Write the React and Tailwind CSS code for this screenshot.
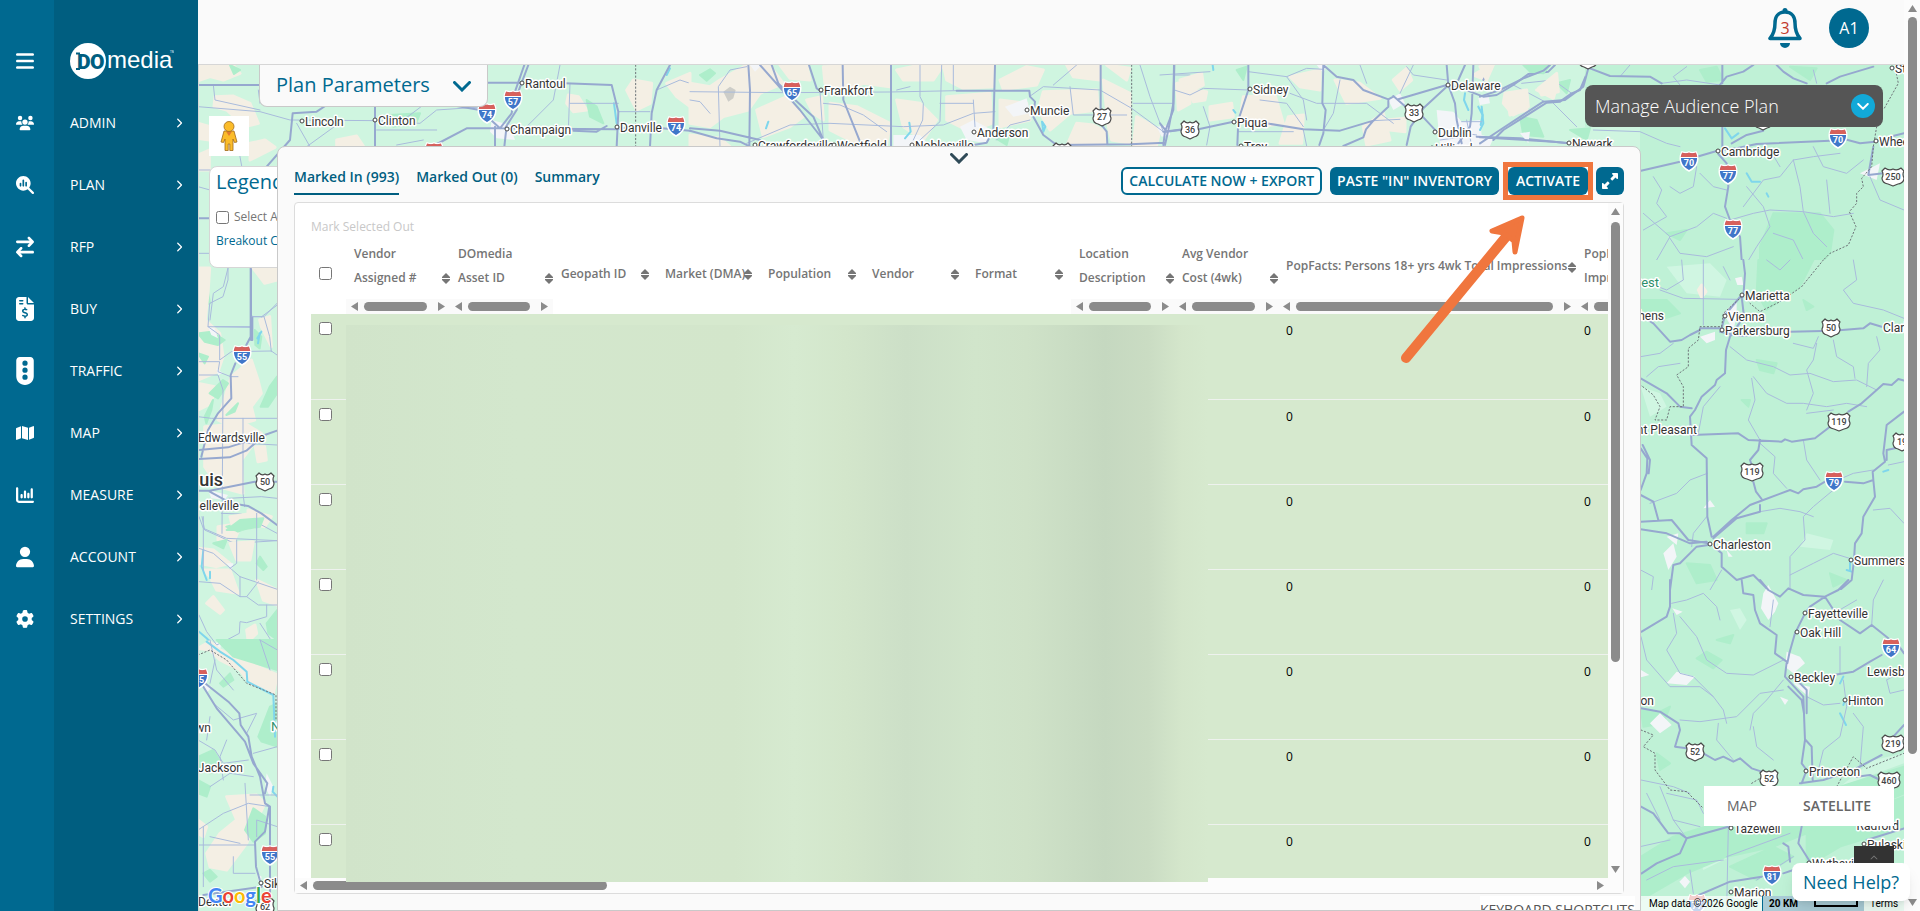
import React, { useState } from "react";
import {
  FaArrowRightArrowLeft,
  FaBars,
  FaChartColumn,
  FaChevronRight,
  FaChevronUp,
  FaFileInvoiceDollar,
  FaGear,
  FaMagnifyingGlassChart,
  FaMap,
  FaTrafficLight,
  FaUpRightAndDownLeftFromCenter,
  FaUser,
  FaUsers,
} from "react-icons/fa6";

const menu = [
  { label: "ADMIN", icon: FaUsers },
  { label: "PLAN", icon: FaMagnifyingGlassChart },
  { label: "RFP", icon: FaArrowRightArrowLeft },
  { label: "BUY", icon: FaFileInvoiceDollar },
  { label: "TRAFFIC", icon: FaTrafficLight },
  { label: "MAP", icon: FaMap },
  { label: "MEASURE", icon: FaChartColumn },
  { label: "ACCOUNT", icon: FaUser },
  { label: "SETTINGS", icon: FaGear },
];

const columns = [
  { lines: ["Vendor", "Assigned #"], width: "w-[104px]", scroll: true },
  { lines: ["DOmedia", "Asset ID"], width: "w-[103px]", scroll: true },
  { lines: ["Geopath ID"], width: "w-[104px]" },
  { lines: ["Market (DMA)"], width: "w-[103px]" },
  { lines: ["Population"], width: "w-[104px]" },
  { lines: ["Vendor"], width: "w-[103px]" },
  { lines: ["Format"], width: "w-[104px]" },
  { lines: ["Location", "Description"], width: "w-[103px]", scroll: true },
  { lines: ["Avg Vendor", "Cost (4wk)"], width: "w-[104px]", scroll: true },
  {
    lines: ["PopFacts: Persons 18+ yrs 4wk Total Impressions"],
    width: "w-[298px]",
    scroll: true,
    value: "0",
  },
  {
    lines: ["PopFacts: Persons", "Impressions"],
    width: "w-[135px]",
    scroll: true,
    value: "0",
  },
];

const rows = [1, 2, 3, 4, 5, 6, 7];

// Map sheets. Each one has its own origin and is drawn at three units per pixel.
const sheets = [
  {
    x: 190,
    y: 60,
    land: [
      "M24 15H130L150 40 100 60 60 50 24 62z",
      "M75 110L130 108 180 130 205 190 165 200 110 150 72 140z",
      "M24 190L60 200 58 240 24 235z",
      "M180 250L225 240 255 262 180 300z",
      "M1135 105L1165 110 1190 150 1150 155 1130 130z",
      "M1330 60L1385 70 1380 130 1340 150 1310 90z",
      "M1430 70L1500 40V140L1460 110z",
      "M440 240L500 228 520 258H440z",
      "M24 285L58 270V330H24z",
    ],
    woods: [
      "M120 15L150 30 132 42z",
      "M1190 120L1220 140 1240 190 1200 170z",
      "M600 165L690 160 680 185 610 200z",
      "M24 690L50 670 60 730 24 740z",
    ],
    town: ["M905 180L960 195 975 240 920 235 900 215z"],
    water: ["M1272 130L1280 190", "M1440 25L1430 45"],
    major: [
      "M24 75H210",
      "M890 68H990M1125 70L1265 75 1285 155 1280 260",
      "M1440 15L1400 90 1385 160 1380 260",
      "M1003 15L975 95 965 160 930 205 870 150 800 138",
      "M1015 15L985 95 980 150 945 205",
      "M735 255L830 205 935 205 1280 208 1340 198 1500 212",
      "M1150 212L1220 215 1250 198",
      "M230 320L300 240 308 160 380 155 410 135",
      "M915 200V260M555 135V260M943 260L948 215",
      "M183 620V840M24 475H60M187 770V840",
    ],
    minor: [
      "M24 140L210 155 300 180 560 182 690 190 740 150 890 140",
      "M70 75L75 120 210 150M205 90L210 130",
      "M130 180L155 318M24 330H60M24 380L60 390M24 580H60",
      "M560 210H740M350 260L440 195 460 180M320 190L360 260",
      "M1140 70L1135 215M1140 130H1285M1285 155H1380M1400 90L1470 60 1500 70",
      "M640 180L720 120M620 255L700 240M1000 210L1090 120 1110 15",
      "M115 620L100 680 70 700 60 780M24 800H183M187 770H215L262 735M215 770L235 840",
    ],
    border: ["M1337 15V260"],
  },
  {
    x: 690,
    y: 60,
    land: [
      "M0 70L60 80 90 60 170 15 240 18 280 70 210 100 175 150 100 170 60 200 0 190z",
      "M0 225L90 235 120 260H0z",
      "M200 150L290 110 340 170 300 200 220 230z",
      "M270 15H350L360 60 300 55z",
      "M400 20L600 15 600 80 520 70 460 95 405 70z",
      "M350 120L395 110 400 180 370 160z",
      "M420 130L500 140 600 190 590 255 500 250 420 210z",
      "M620 120L690 130 740 180 700 240 640 200z",
      "M620 30L690 15H760L730 60 640 60z",
      "M760 15L910 18 910 80 820 85 770 60z",
      "M770 110L900 100 905 190 840 215 770 180z",
      "M930 60L1010 20 1060 30 1040 75 940 88z",
      "M930 120L1010 130 1020 180 930 200z",
      "M1060 95L1220 90 1225 150 1140 160 1080 210 1045 150z",
      "M1130 15L1230 15V60L1150 50z",
      "M1160 190L1210 195 1245 215 1245 258H1130z",
      "M1240 60L1320 100 1320 250 1265 240 1255 200z",
      "M1250 15L1320 25 1310 60z",
      "M1340 170L1410 210 1400 255H1330z",
      "M1460 70L1500 60V130L1465 150z",
    ],
    grey: ["M100 95L120 80 137 90 130 115 115 125z"],
    woods: ["M30 45L60 28 75 40 50 62z", "M900 225L960 215 950 255z"],
    town: [
      "M945 140L1010 115 1020 160 970 170z",
      "M810 200L850 180 905 210 890 250 830 240z",
      "M180 15H215L195 35z",
      "M1400 200L1440 195 1440 225 1415 230z",
      "M610 225L690 225 720 258H610z",
    ],
    water: ["M235 185L228 205", "M658 188L662 215 645 235", "M1056 185L1066 200 1060 215z"],
    major: [
      "M175 15L180 90 178 260",
      "M210 15L330 150 400 240",
      "M245 15L265 70 310 115 370 170 400 240",
      "M357 15L380 85 395 95",
      "M458 15L460 120 510 245",
      "M603 15V260",
      "M915 15L910 210 890 248 850 255",
      "M800 92H1018L1020 110 1035 125 1030 170 1060 225 1100 255 1320 253 1425 248",
      "M1232 15V150M1235 195L1250 215 1252 250",
      "M0 205L90 212 210 240M0 212L80 235 150 245 180 260",
      "M1452 15L1450 130 1435 210 1425 255",
      "M1420 215L1480 208",
    ],
    minor: [
      "M0 95L280 98 600 96 800 92",
      "M90 260L85 80 120 30 170 20",
      "M390 95L400 240M400 130L450 135 520 165 590 215",
      "M170 250L300 195 420 190 640 200 760 195 850 160 915 155",
      "M690 15V110L700 130 698 180 670 240M755 15L750 185 690 240",
      "M1018 110L1060 80 1230 90 1325 145 1420 215",
      "M1350 15L1380 110 1420 215M1330 130H1450",
      "M1140 80L1150 165H1310M1160 15L1090 75",
      "M1020 180L960 195 920 240M1452 45H1500M790 15V90M850 120L855 200",
      "M0 120L30 125 60 160M620 90L660 80M750 130H850",
    ],
    border: ["M1325 15V260"],
  },
  {
    x: 1160,
    y: 60,
    land: [
      "M60 60L125 40 130 75 95 90z",
      "M85 90L140 95 135 120 100 125z",
      "M150 140L215 130 220 170 150 180z",
      "M250 110L345 105 370 190 300 200 240 175z",
      "M390 50L480 30V90L420 80z",
      "M385 170L430 165 425 250 360 250z",
      "M525 60L600 70 660 115 560 130z",
      "M610 200L670 160 690 240 620 255z",
      "M700 60L740 25 755 60 720 90z",
      "M680 180L735 175 735 215 690 210z",
      "M1040 100L1100 100 1100 150 1050 165z",
      "M940 45L975 25 980 60z",
      "M1130 90L1190 80 1180 115z",
    ],
    woods: ["M230 30L260 20 250 60z", "M1080 170L1130 180 1150 230 1090 225z", "M1190 70L1230 60 1220 100z"],
    town: [
      "M685 120L720 100 735 130 700 150z",
      "M830 150L880 155 905 185 960 180 965 225 1000 235 990 258H840z",
      "M470 15H500L490 40z",
      "M955 115L985 105 990 130 960 135z",
    ],
    water: ["M158 15L160 30", "M220 150L226 158", "M915 100L912 120 925 150", "M955 140L968 165 962 195"],
    major: [
      "M43 15L40 150 15 215 10 255M0 190L20 215 60 210",
      "M115 208L220 185 320 190 430 208 540 212 640 182 685 140 685 118 700 110",
      "M265 15L265 90 235 180 232 255",
      "M490 15L530 50 580 60 610 90 685 118",
      "M490 15L487 130 497 150 490 220 478 255",
      "M550 258L610 232 618 208 640 182",
      "M700 108L742 145M788 170L830 215",
      "M715 118L860 75 905 85 970 110 1010 105 1060 75 1105 42 1165 35 1185 15",
      "M860 80L790 145 752 200 740 255",
      "M860 15L865 75 885 130 890 180 905 250",
      "M915 15L895 60M995 15L970 60",
      "M940 15L935 160 930 200 895 250",
      "M1000 240L1030 210 1160 128 1200 125 1235 100 1260 90 1285 30",
      "M950 230L1080 235 1225 250 1320 248",
    ],
    minor: [
      "M0 45L150 35M43 90L90 105 130 85 265 90M300 120L380 130 430 200",
      "M265 35L380 50 440 25 490 28M390 100L470 130H620L700 190",
      "M760 15L720 100M860 60L760 45 740 20M380 50L430 120 440 180",
      "M1060 75L1160 128M1085 70L1180 60 1235 100M1180 130L1250 200",
      "M540 60L520 160 490 210M640 182L720 178M600 15L620 70",
      "M905 185H965M880 215L950 225M920 180L935 258M840 240L900 232",
      "M130 140L150 200 140 255M235 215H400M430 210L440 258",
    ],
  },
  {
    x: 1480,
    y: 0,
    land: ["M75 280L140 270 145 320 100 345 70 310z", "M175 265L230 220 235 275 185 285z", "M0 200L40 195 20 240z"],
    hills: ["M315 195H1280V860H480V380L315 380z"],
    woods: [
      "M130 195H210L190 220 150 215z",
      "M840 740L880 640 1020 640 1060 690 1050 760 980 840H840z",
      "M270 390L330 385 320 420z",
      "M660 210L710 200 730 240 680 245z",
      "M930 200L1010 205 990 240z",
      "M560 700L620 690 600 720z",
    ],
    town: ["M120 400L150 395 145 430z", "M260 420L320 440 280 440z", "M1140 520L1200 490 1190 540z"],
    water: ["M5 320L10 370 0 390", "M735 385L755 415 775 400", "M800 520L815 545 840 545", "M860 580L865 590"],
    major: [
      "M0 290L60 270 130 235 190 212 210 195",
      "M325 205L310 260 255 300 190 305 60 390 0 430",
      "M330 205L390 228 510 230 545 250",
      "M720 255L740 230 790 215 820 195",
      "M890 195L910 215 940 235 980 250",
      "M1040 250L1080 230 1180 200",
      "M0 412L220 425 270 430",
      "M483 512L600 485 710 453 770 445 830 432 1050 422",
      "M1095 418L1140 430 1185 425 1230 410 1272 400",
      "M715 462L740 490 745 560 735 620 750 660 780 710 785 780 790 840",
      "M727 195V250M727 380V440",
      "M1180 440L1165 525 1210 520M755 430L800 405 850 392",
    ],
    minor: [
      "M600 255L580 230 620 200M420 230L450 195M1000 210L1010 250",
      "M545 250L620 240 720 255M340 390L480 395 560 430 600 440",
      "M490 640L570 710 650 680 700 640 740 655M520 530L545 570 530 610 560 650 490 690",
      "M570 710L530 780 490 800M570 715L600 760 680 770 760 740",
      "M750 660L820 640 870 630 970 635 1060 650 1120 640",
      "M800 560L850 620 870 680 830 740 800 790M940 480L900 530 850 540 790 620",
      "M940 480L1000 470 1080 460M940 480L960 560 970 635 1000 700 1040 740",
      "M870 450L900 500M650 500L640 560 600 580 570 560M1000 440L1030 500 1100 520 1150 480",
      "M1040 540L1050 640M660 520L700 560 740 570M1170 530L1200 600 1272 630",
      "M1040 380L1070 330 1200 300M880 700L940 720 970 780 960 840",
    ],
    border: [
      "M1245 200L1255 250 1210 330M1190 380L1180 440 1175 500 1145 535 1150 560 1130 580 1130 610 1108 635 1128 680 1105 735 1050 760 1010 800 975 840",
    ],
  },
  {
    x: 1600,
    y: 260,
    hills: ["M120 0H915V990H120z"],
    woods: [
      "M475 0H640L600 80 500 150 470 100z",
      "M122 120L200 120 240 160 180 180 122 170z",
      "M470 300L530 310 520 340 480 330z",
      "M425 420L450 420 445 440z",
      "M610 120L640 140 620 150z",
      "M440 790L500 790 490 820 440 820z",
      "M260 910L330 915 350 960 290 970z",
      "M690 940L740 960 700 980z",
    ],
    light: ["M200 20L330 10 380 60 360 110 260 100z", "M122 380L180 400 200 440 150 470z", "M620 820L700 840 690 870 600 860z"],
    land: ["M295 90L305 75 318 95 305 112z"],
    town: [
      "M405 55L425 50 430 75 412 75z",
      "M300 230L345 215 345 240 320 250z",
      "M370 160L410 120 410 170 400 210z",
      "M190 880L220 850 230 890 205 930z",
      "M310 745L330 720 345 740z",
      "M200 830L235 820 230 855z",
      "M380 870L398 890 385 890z",
    ],
    water: ["M850 635L865 630", "M740 930L755 935", "M750 905V930"],
    major: [
      "M430 0L435 40 430 110M122 165L160 190 210 245 245 240 270 225 300 210",
      "M300 205L365 205 375 165 425 105",
      "M425 110L432 170 390 230 378 270 375 340 350 360 345 375 305 410 285 450 270 470 275 555 320 595 322 770 335 830",
      "M360 215L420 228 570 215 700 212 790 205 810 190 845 200",
      "M122 355L200 400 240 440 275 445",
      "M275 525L415 520 445 540 545 545 555 538 575 545 645 535 690 500",
      "M745 455L785 430 830 390 850 372 875 375 895 357 912 362",
      "M480 540L475 570 450 600 455 615M460 665L468 695 487 720",
      "M490 720L570 690 595 700 610 688 650 680 680 662",
      "M735 665L790 670 820 660 818 635 855 605 850 580 860 495 912 455M860 600L860 570 885 565",
      "M820 660L825 710 790 770 785 820 765 850 762 900 755 960 720 990",
      "M490 720L450 735 395 780 340 830M480 735V755L410 775 340 835",
      "M122 785L215 780 265 840 325 850M122 808L200 820 270 850 320 845",
      "M122 565L142 595 140 640 122 690M128 555L150 600 146 640M122 705L160 725 175 780",
      "M325 855L290 860 240 910 220 915 210 990",
      "M335 855L365 880 365 920 410 960 460 945 500 985",
    ],
    minor: [
      "M180 90L250 115 410 118M310 0V195M245 0L250 60 200 90 122 60",
      "M122 290L180 280 220 250M140 350L175 320 240 310",
      "M390 260L440 300 520 320 570 345 630 340 700 365 770 360 800 375 830 390",
      "M390 60L370 20M500 0L540 30 570 0M760 0L770 60 730 90 760 130 850 150 912 175",
      "M580 250L640 265 655 230M650 250L640 300 620 330 640 400 620 450",
      "M700 240L710 290 760 320 765 355M830 230L840 270 805 310 800 380",
      "M460 350L500 400 560 430 610 430 680 440 740 430 800 440",
      "M620 460L700 450M455 355L465 420 445 480 480 540",
      "M360 380L310 440 295 520M480 550L525 590 520 640 560 685",
      "M610 540L620 600 660 660M700 690L640 740 610 770 615 840 570 890 570 990",
      "M480 755L540 745 600 755 640 770M690 670L760 640 820 630",
      "M820 750L870 745 912 790M765 900L700 880 640 910 570 945",
      "M912 605L865 615M322 640L270 660 230 700 150 730M320 770L280 820 275 860",
      "M122 930L160 950 155 990M365 930L330 990",
    ],
    border: [
      "M670 0L605 80 540 125 480 155 450 130M425 110L370 160 365 200 300 200 295 240 265 265 265 320 230 345 250 380 250 440 210 440 200 480 165 480 180 440 160 405 122 375",
    ],
  },
  {
    x: 1440,
    y: 580,
    hills: ["M600 30H1395V1000H600z"],
    woods: [
      "M770 235L800 215 845 240 820 265z",
      "M830 180L880 165 870 190z",
      "M603 390L650 400 690 380 670 430 610 440z",
      "M603 830L700 770 860 720 1060 700 1200 620 1392 560V640L1200 720 1000 800 860 830 740 880 603 960z",
      "M1100 760L1392 650V740L1200 800 1100 860z",
      "M870 860L1000 800 1060 830 950 900z",
      "M650 520L690 550 660 570z",
    ],
    light: ["M870 90L900 150 920 120 900 85z", "M1200 620L1300 540 1392 520V550z", "M780 840L1000 750 990 770 790 870z", "M603 920L740 850 720 880 610 940z"],
    town: [
      "M970 40L985 15 1015 70 1005 95 985 120 963 85z",
      "M1040 215L1080 230 1095 250 1060 280 1035 260z",
      "M680 310L710 275 765 290 740 315z",
      "M630 430L660 400 695 435 660 460z",
      "M1020 350L1045 360 1035 375z",
      "M1060 310L1110 320 1105 350z",
      "M718 905L735 888 750 905 735 925z",
      "M697 85L728 95 710 105z",
      "M603 240H625M603 270L628 285 603 292z",
    ],
    water: ["M1210 290L1200 310", "M1200 400L1218 435", "M1215 360L1210 375"],
    major: [
      "M690 0V80L680 110 630 140 605 155",
      "M905 0L910 40 940 45 945 90 960 130 1010 165 1005 220 1040 245 1035 290 1090 350 1095 480 1085 550 1100 570 1085 610",
      "M1045 320L1085 360 1092 400M1060 290L1100 330V400",
      "M960 0L985 30 1020 50 1045 25 1090 45 1155 50 1195 30 1225 0",
      "M1155 50L1110 80 1095 100 1065 160 1048 220 1042 250",
      "M1155 50L1200 120 1260 160 1295 135 1345 175M1378 200L1392 220",
      "M1180 285L1240 275 1290 245 1325 225",
      "M1097 480L1115 500 1118 600",
      "M603 385L660 395 715 430 720 450 705 500 740 505M790 520L825 540 850 530 880 545 900 535 935 565 965 575",
      "M1392 435L1360 470M1325 525L1240 570 1150 600 1080 610",
      "M1250 590L1290 585 1320 600",
      "M603 680L640 700 685 760 720 760 740 775 865 740",
      "M740 775L720 820 650 850 605 880",
      "M1085 740L1075 790 1110 845M1030 790L1045 800 1050 845",
      "M770 948L870 905 965 890M1030 880L1060 870",
      "M1280 780L1392 745",
    ],
    minor: [
      "M695 70L740 60 790 40 830 80 840 120",
      "M700 100L710 160 680 210 720 280 760 290 820 350 850 390 860 430",
      "M720 110L770 170 800 240 860 280 940 285 1030 240",
      "M603 170L620 240 690 320 780 320 820 350",
      "M1030 300L980 360 940 400 930 450M1030 330L960 340 890 410 780 425 720 420",
      "M1100 350L1150 375 1200 370M1210 300L1220 380 1200 470 1150 510 1130 590",
      "M1110 100L1190 95 1250 60M1330 0L1300 60 1295 135M1200 200L1200 280",
      "M835 430L830 480 880 540M940 440L950 500 1000 540M603 600L700 620 750 640",
      "M1240 400L1270 440 1260 560M1340 300L1392 270M1340 300L1350 340 1392 330",
      "M620 640L660 720M660 620L700 720 740 775M680 640L770 660 790 700M700 720L780 740",
      "M865 740L860 990M600 800L690 780M620 900L700 860 850 840",
      "M860 830L1050 760M950 900L1060 830M1000 60L990 140M750 870L760 940",
    ],
    border: ["M603 450L640 465 610 500 645 520 645 570 690 630 740 635 790 685", "M935 610L960 595M1190 620L1240 530 1280 565 1392 520"],
  },
  {
    x: 198,
    y: 260,
    land: [
      "M0 24H35L30 100 20 200 0 190z",
      "M0 160L65 220 75 290 60 335 0 360z",
      "M165 24H237V60L200 70z",
      "M185 180L215 170 220 260 190 200z",
      "M100 350L160 300 180 360 190 400 160 440 170 480 100 500 60 480z",
      "M0 370L50 380 40 430 0 450z",
      "M20 500L140 490 190 520 130 600 135 700 60 680 20 620z",
      "M172 560L200 560 205 600 180 605z",
      "M150 750L220 770 200 800 150 790z",
      "M60 800L130 790 110 840H60z",
    ],
    woods: [
      "M0 220L40 215 80 240 60 255 20 245z",
      "M170 210L190 230 185 265 172 255z",
      "M188 440L215 380 237 350V400L210 440z",
      "M20 470L45 420 40 450 25 490z",
      "M35 400L75 360 90 370 60 415z",
      "M85 465L120 430 110 455z",
      "M85 800L160 780 180 790 120 815z",
      "M0 280L30 290 20 310z",
    ],
    town: ["M30 200L50 205 60 235 40 225z", "M55 325L75 340 60 345z", "M30 690L90 705 80 720 40 715z"],
    water: ["M185 220L180 250", "M190 215L178 235"],
    major: [
      "M158 24V230L145 255M112 310L98 345 100 415 60 460 30 510 10 590",
      "M0 570L90 562 145 545M0 597L95 592 145 572 200 525 237 512",
      "M0 692H35L170 665 237 665M35 695L100 730 150 738 190 760 237 795",
    ],
    minor: [
      "M90 24V60L75 110 35 130 30 200 65 225V300L100 275 220 273 237 285",
      "M30 200L158 202M158 170H198L237 130M198 170L215 230 220 275",
      "M0 305H65L60 335 98 350H120M0 345H60L75 390 72 820",
      "M0 470L40 475H237M135 475V700L140 740M145 550L237 555",
      "M90 715L190 710 237 715M12 770L20 810 110 850 237 842M70 760L130 762 237 820",
    ],
  },
  {
    x: 0,
    y: 330,
    land: [
      "M597 655L640 660 690 700 650 710 597 700z",
      "M690 640L760 635 750 690 710 690z",
      "M620 820L640 800 670 840 660 850z",
      "M740 900L765 885 770 910 745 935z",
      "M770 750L832 780V825L790 810z",
      "M610 720L690 720 715 790 650 780 630 740z",
      "M690 560L760 550 770 590 700 600z",
    ],
    woods: [
      "M680 600L720 570 790 565 780 590 720 600z",
      "M770 700L780 680 800 710 790 720z",
      "M640 640L680 630 670 655z",
      "M800 880L832 840V930L805 910z",
    ],
    town: ["M680 700L700 700 695 720z", "M640 940L665 935 660 960z"],
    water: ["M610 660L605 710 620 750M630 725V745", "M597 905L620 925 655 960"],
    major: [],
    minor: [
      "M610 560V720M597 560L610 595 680 625 832 632",
      "M770 550V750M710 630V700L690 715",
      "M597 655L640 670 720 740 832 778M720 740V800",
      "M597 755L660 760 720 800 740 800 775 755",
      "M740 800L775 825H832M800 825V860L740 878 720 875 718 910 690 925 650 945",
      "M597 855L620 905 650 945M780 880L832 960",
    ],
  },
  {
    x: 190,
    y: 640,
    land: [
      "M24 25L60 30 90 60 150 90 180 130 250 160 262 105 90 30 60 5z",
      "M110 470L200 465 225 490 190 560 170 610 110 690 60 680 50 640 90 580 140 540z",
      "M24 540L50 560 40 590 24 580z",
    ],
    woods: [
      "M80 0H262V90L130 50z",
      "M205 290L240 200 262 190V320L215 305z",
      "M90 130L120 100 130 120 100 140z",
      "M165 570L190 505 225 530 225 580 190 605z",
      "M24 350L70 330 100 380 60 400 24 380z",
      "M40 700L60 690 80 710 60 725z",
      "M24 420L60 440 50 470 24 460z",
    ],
    town: ["M40 130L65 140 50 160z", "M230 400L250 440 240 470 225 440z", "M200 700L215 710 210 740z"],
    water: ["M50 5L90 35 130 60 170 95 172 125 250 165 255 290", "M250 440L248 455 262 470"],
    major: [
      "M45 130L115 185 148 220 152 255 175 290 185 350 210 410 225 490 240 500V640",
      "M40 140L80 205 165 305 190 370 232 430 225 460M240 660V760",
      "M238 500L225 575 195 605 198 680 215 740M40 765L215 740",
    ],
    minor: [
      "M24 300L75 330 100 370 175 360M262 320L190 340M70 190L130 240 200 220 170 280",
      "M24 570L100 520 175 490 240 500M165 430L175 600M24 615H195M130 650V700H195",
      "M40 560V740M60 590L150 610M180 465H262M60 230L50 300M60 440L120 400 190 410",
      "M110 300L90 350 100 420M75 60L60 130M200 590V540L262 560",
      "M60 0L80 90 130 150M210 0L262 30M210 0L240 90",
    ],
    border: ["M24 45L60 30 110 60 170 130 220 150 258 165 258 240"],
  },
];

const cities = [
  ["Rantoul", 525, 88],
  ["Lincoln", 305, 126],
  ["Clinton", 378, 125],
  ["Champaign", 510, 134],
  ["Danville", 620, 132],
  ["Frankfort", 824, 95],
  ["Muncie", 1030, 115],
  ["Anderson", 977, 137],
  ["Crawfordsville", 758, 150],
  ["Westfield", 837, 150],
  ["Noblesville", 915, 150],
  ["Sidney", 1253, 94],
  ["Piqua", 1237, 127],
  ["Troy", 1244, 151],
  ["Delaware", 1451, 90],
  ["Dublin", 1438, 137],
  ["Hilliard", 1435, 153],
  ["Newark", 1572, 148],
  ["Steubenville", 1895, 73],
  ["Cambridge", 1721, 156],
  ["Wheeling", 1879, 146],
  ["Marietta", 1745, 300],
  ["Vienna", 1728, 321],
  ["Parkersburg", 1725, 335],
  ["Charleston", 1713, 549],
  ["Summersville", 1854, 565],
  ["Fayetteville", 1808, 618],
  ["Oak Hill", 1800, 637],
  ["Beckley", 1794, 682],
  ["Hinton", 1848, 705],
  ["Princeton", 1809, 776],
  ["Tazewell", 1734, 833],
  ["Pulaski", 1867, 849],
  ["Marion", 1734, 897],
  ["Wytheville", 1812, 868],
  ["Sikeston", 264, 888],
];

// labels without a dot of their own
const places = [
  ["Clarksburg", 1883, 332, "start"],
  ["Lewisburg", 1867, 676, "start"],
  ["Athens", 1664, 320, "end"],
  ["Point Pleasant", 1697, 434, "end"],
  ["Logan on", 1654, 705, "end"],
  ["Radford", 1899, 830, "end"],
  ["Edwardsville", 198, 442, "start"],
  ["Belleville", 239, 510, "end"],
  ["Bonne wn", 211, 732, "end"],
  ["Jackson", 243, 772, "end"],
  ["Dexter", 198, 906, "start"],
];

const interstates = [
  [57, 513, 100],
  [74, 487, 113],
  [74, 676, 126],
  [74, 434, 152],
  [65, 792, 91],
  [70, 1689, 161],
  [70, 1838, 138],
  [77, 1728, 174],
  [77, 1733, 229],
  [79, 1834, 481],
  [64, 1891, 648],
  [81, 1772, 875],
  [77, 1697, 904],
  [55, 242, 355],
  [55, 199, 678],
  [55, 270, 855],
];

const usRoutes = [
  [27, 1102, 117],
  [36, 1190, 130],
  [33, 1414, 113],
  [23, 1588, 60],
  [22, 1763, 121],
  [250, 1893, 177],
  [50, 1831, 328],
  [119, 1839, 422],
  [119, 1752, 472],
  [19, 1902, 442],
  [52, 1695, 752],
  [52, 1769, 779],
  [219, 1893, 744],
  [460, 1889, 781],
  [50, 265, 482],
  [62, 265, 907],
  [35, 1062, 152],
];

const Interstate = ({ number, x, y }) => (
  <g transform={`translate(${x} ${y})`}>
    <path
      d="M-7-9C-4-8-2-8 0-9 2-8 4-8 7-9 10-4 10 5 0 10-10 5-10-4-7-9z"
      fill="#3f76c9"
      stroke="#fff"
      strokeWidth="1.5"
    />
    <path d="M-7-8.500C-4-7.500-2-7.500 0-8.500 2-7.500 4-7.500 7-8.500L8.300-4H-8.300z" fill="#d8605b" />
    <path d="M-8.500-3.500H8.500" stroke="#fff" strokeWidth="1" />
    <text y="5" textAnchor="middle" fill="#fff" fontSize="9" fontWeight="700">
      {number}
    </text>
  </g>
);

const UsRoute = ({ number, x, y }) => (
  <g transform={`translate(${x} ${y})`}>
    <path
      d={
        number > 99
          ? "M-8-9Q-4-6 0-8 4-6 8-9L11-6Q9-3 11 1 11 6 5 7L0 9-5 7Q-11 6-11 1-9-3-11-6z"
          : "M-6-9Q-3-6 0-8 3-6 6-9L9-6Q7-3 9 1 9 6 4 7L0 9-4 7Q-9 6-9 1-7-3-9-6z"
      }
      fill="#fff"
      stroke="#4a4a4a"
      strokeWidth="1.200"
      strokeLinejoin="round"
    />
    <text y="3" textAnchor="middle" fill="#444" fontSize="9" fontWeight="500">
      {number}
    </text>
  </g>
);

const MapCanvas = () => (
  <svg
    className="absolute inset-0 h-full w-full font-[Roboto,sans-serif]"
    viewBox="199 65 1705 846"
    preserveAspectRatio="xMinYMin slice"
    aria-label="Map"
  >
    <rect x="199" y="65" width="1705" height="846" fill="#cff5e0" />
    {sheets.map((s, i) => (
      <g
        key={i}
        transform={`translate(${s.x} ${s.y}) scale(.33333)`}
        strokeLinejoin="round"
        strokeLinecap="round"
        fill="none"
      >
        {s.hills && <path d={s.hills.join("")} fill="#bff1d6" />}
        {s.light && <path d={s.light.join("")} fill="#d0f6e2" />}
        <path d={(s.land || []).join("")} fill="#f4efe4" stroke="#f4efe4" strokeWidth="9" />
        <path d={s.woods.join("")} fill="#aeeecb" stroke="#aeeecb" strokeWidth="6" />
        {s.grey && <path d={s.grey.join("")} fill="#cdcdc8" />}
        <path d={s.town.join("")} fill="#f3f5f8" />
        <path d={s.water.join("")} stroke="#7fd6ec" strokeWidth="6" />
        <path d={s.minor.join("")} stroke="#a9bbdc" strokeWidth="3" />
        <path d={s.major.join("")} stroke="#96a8cf" strokeWidth="6" />
        {s.border && (
          <path d={s.border.join("")} stroke="#6d7478" strokeWidth="3" strokeDasharray="4 7" />
        )}
      </g>
    ))}
    {interstates.map(([number, x, y]) => (
      <Interstate key={`${x}-${y}`} number={number} x={x} y={y} />
    ))}
    {usRoutes.map(([number, x, y]) => (
      <UsRoute key={`${x}-${y}`} number={number} x={x} y={y} />
    ))}
    <g fontSize="12" fill="#333" stroke="#fff" strokeWidth="3" paintOrder="stroke" strokeLinejoin="round">
      {cities.map(([name, x, y]) => (
        <g key={name}>
          <text x={x} y={y}>
            {name}
          </text>
          <circle cx={x - 3} cy={y - 5} r="2" fill="#fff" stroke="#444" strokeWidth="1" paintOrder="normal" />
        </g>
      ))}
      {places.map(([name, x, y, anchor]) => (
        <text key={name} x={x} y={y} textAnchor={anchor}>
          {name}
        </text>
      ))}
      <text x="223" y="486" textAnchor="end" fontSize="18" fontWeight="500">
        St. Louis
      </text>
      <text x="1659" y="287" textAnchor="end" fontSize="13" fill="#2f8f6b">
        National Forest
      </text>
      <text x="271" y="731" fontSize="13" fill="#2f8f6b">
        National
      </text>
    </g>
    <text x="208" y="903" fontSize="20" stroke="#fff" strokeWidth="2" paintOrder="stroke" className="font-[Lato,sans-serif] font-bold">
      <tspan fill="#4285f4">G</tspan>
      <tspan fill="#ea4335">o</tspan>
      <tspan fill="#fbbc04">o</tspan>
      <tspan fill="#4285f4">g</tspan>
      <tspan fill="#34a853">l</tspan>
      <tspan fill="#ea4335">e</tspan>
    </text>
  </svg>
);

const Logo = () => (
  <svg className="h-9 w-[104px]" viewBox="0 0 104 36" aria-label="DOmedia">
    <circle cx="18" cy="18" r="18" fill="#fff" />
    <g fontSize="21" fontWeight="900" fill="#005e80" className="font-[Roboto,sans-serif]">
      <text x="7" y="26">
        D
      </text>
      <text x="20" y="26">
        O
      </text>
    </g>
    <path d="M6 10.500h4M6 26h4" stroke="#005e80" strokeWidth="2" />
    <text x="37" y="25" fontSize="24" fill="#fff" className="font-[Liberation_Sans,sans-serif]">
      media
    </text>
    <text x="100" y="10" fontSize="3" fill="#fff">
      TM
    </text>
  </svg>
);

const Bell = () => (
  <svg className="h-10 w-9" viewBox="0 0 36 40" fill="none">
    <path
      d="M18 4C11 4 8 9 8 15 8 23 6 27 3 30.500H33C30 27 28 23 28 15 28 9 25 4 18 4z"
      stroke="#006990"
      strokeWidth="3.500"
      strokeLinejoin="round"
    />
    <path d="M18 0a2.500 2.500 0 0 1 2.500 2.500V5h-5V2.500A2.500 2.500 0 0 1 18 0zM13 35h10a5 5 0 0 1-10 0z" fill="#006990" />
  </svg>
);

const Pegman = () => (
  <svg className="h-[30px] w-[18px]" viewBox="0 0 18 30" stroke="#a06a1c" strokeWidth=".8">
    <path d="M4 10h10l3 11-2.500.5L13 18v11.500H9.800V23H8.200v6.500H5V18l-1.500 3.500L1 21z" fill="#fbbc2a" />
    <path d="M6 10.500h6L9 15z" fill="#e37a2e" stroke="none" />
    <circle cx="9" cy="5.500" r="5" fill="#fbbc2a" />
  </svg>
);

const Chevron = ({ className }) => (
  <svg className={className} viewBox="0 0 18 11" fill="none" stroke="currentColor" strokeWidth="3">
    <path d="M1.500 1.500L9 9l7.500-7.500" strokeLinecap="round" />
  </svg>
);

const SortIcon = () => (
  <svg className="h-[11px] w-2 shrink-0" viewBox="0 0 8 11" fill="#757575">
    <path d="M4 0l4 4v1H0V4zM4 11L0 7V6h8v1z" />
  </svg>
);

const Arrow = ({ dir }) => {
  const shapes = {
    left: "M8 0v9L1 4.500z",
    right: "M1 0l7 4.500L1 9z",
    up: "M0 8h9L4.500 1z",
    down: "M0 1h9L4.500 8z",
  };
  return (
    <svg className="size-[9px] shrink-0" viewBox="0 0 9 9" fill="#8b8b8b">
      <path d={shapes[dir]} />
    </svg>
  );
};

const ColumnScroll = () => (
  <div className="flex h-[15px] items-center bg-[#fafafa] px-1">
    <Arrow dir="left" />
    <span className="mr-2.5 ml-[5px] h-[9px] flex-1 rounded-full bg-[#8b8b8b]" />
    <Arrow dir="right" />
  </div>
);

const HeaderCell = ({ column }) => (
  <th scope="col" className={`${column.width} p-0 text-left font-semibold`}>
    {column.scroll ? (
      <>
        <div className="mb-[3px] flex h-[60px] items-center pl-2">
          <span className="min-w-0 flex-1 leading-6 whitespace-nowrap">
            {column.lines.map((line) => (
              <span key={line} className="block">
                {line}
              </span>
            ))}
          </span>
          <span className={column.lines.length > 1 ? "pt-6" : "pt-0.5"}>
            <SortIcon />
          </span>
        </div>
        <ColumnScroll />
      </>
    ) : (
      <div className="flex h-[78px] items-center pr-2 pb-0.5 pl-2">
        <span className="min-w-0 flex-1 whitespace-nowrap">{column.lines[0]}</span>
        <SortIcon />
      </div>
    )}
  </th>
);

const InventoryTable = () => (
  <table className="w-[1400px] table-fixed text-xs">
    <thead>
      <tr className="text-[#757575]">
        <th className="w-[35px] p-0 text-left">
          <div className="flex h-[78px] items-center pb-1 pl-2">
            <input type="checkbox" aria-label="Select all rows" />
          </div>
        </th>
        {columns.map((column, i) => (
          <HeaderCell key={i} column={column} />
        ))}
      </tr>
    </thead>
    <tbody>
      {rows.map((row) => (
        <tr key={row} className="h-[85px] border-b border-[#eef2ee] bg-[#d6e9ce] text-black">
          <td className="pt-2 pl-2 align-top">
            <input type="checkbox" className="block" aria-label={`Select row ${row}`} />
          </td>
          {columns.map((column, i) => (
            <td key={i} className="pt-[9px] pl-2 align-top">
              {column.value}
            </td>
          ))}
        </tr>
      ))}
    </tbody>
  </table>
);

const tabs = ["Marked In (993)", "Marked Out (0)", "Summary"];

const InventoryPanel = () => {
  const [active, setActive] = useState(tabs[0]);

  return (
    <section className="absolute top-[81px] right-[263px] bottom-0 left-[78px] flex flex-col rounded-t-lg border border-[#c9c9c9] bg-[#fafafa] px-4 pt-3.5 pb-4">
      <button aria-label="Collapse" className="absolute top-1.5 left-1/2 -translate-x-1/2 text-[#2f4a57]">
        <Chevron className="h-[11px] w-[18px]" />
      </button>
      <div className="mb-px flex h-10 items-center">
        <div className="flex gap-[17px]">
          {tabs.map((tab) => (
            <button
              key={tab}
              onClick={() => setActive(tab)}
              className={`border-b-2 pb-1.5 text-sm font-semibold text-[#005e80] ${
                active === tab ? "border-[#005e80]" : "border-transparent"
              }`}
            >
              {tab}
            </button>
          ))}
        </div>
        <button className="ml-auto h-7 rounded-md border-2 border-[#006990] bg-white px-1.5 text-sm leading-5 font-semibold text-[#006990]">
          CALCULATE NOW + EXPORT
        </button>
        <button className="ml-2 h-7 rounded-md bg-[#006990] px-[7px] text-sm leading-5 font-semibold text-white">
          PASTE "IN" INVENTORY
        </button>
        <div className="ml-1 border-[5px] border-[#f0763e] bg-white">
          <button className="block h-7 rounded-md bg-[#006990] px-2 text-sm leading-5 font-semibold text-white">
            ACTIVATE
          </button>
        </div>
        <button
          aria-label="Expand"
          className="ml-[3px] flex size-7 items-center justify-center rounded-md bg-[#006990] text-white"
        >
          <FaUpRightAndDownLeftFromCenter className="size-4" />
        </button>
      </div>

      <div className="relative flex min-h-0 flex-1 flex-col rounded-sm border border-[#dcdcdc] bg-white">
        <div className="flex min-h-0 flex-1">
          <div className="min-w-0 flex-1 overflow-hidden pl-4">
            <div className="h-[33px] pt-4">
              <button disabled className="block text-xs text-[#c8c8c8]">
                Mark Selected Out
              </button>
            </div>
            <InventoryTable />
          </div>
          <div className="flex w-[15px] flex-col items-center bg-[#fcfcfc] pt-1 pb-1">
            <Arrow dir="up" />
            <div className="my-1.5 flex flex-1 flex-col">
              <span className="h-[69%] w-[9px] rounded-full bg-[#8b8b8b]" />
            </div>
            <Arrow dir="down" />
          </div>
        </div>
        <div className="flex h-[15px] items-center bg-[#fcfcfc] pr-[18px] pl-1">
          <Arrow dir="left" />
          <div className="mx-[5px] flex-1">
            <span className="block h-[9px] w-[23%] rounded-full bg-[#8b8b8b]" />
          </div>
          <Arrow dir="right" />
        </div>
        <div className="absolute top-[122px] bottom-[11px] left-[51px] w-[862px] bg-[linear-gradient(to_right,#d1e4ca_0%,#d3e7cd_20%,#d3e6cb_45%,#d6ead0_52%,#d3e6cb_58%,#ccdfc7_65%,#d1e5cb_73%,#cfe2c8_79%,#c5d8c0_88%,#cadcc3_93%,#d4e6cb_97%,#d6e9ce_100%)]" />
      </div>

      <svg className="absolute top-[65px] right-28 h-[152px] w-32" viewBox="1400 212 128 152" fill="none">
        <path d="M1406 358L1510 232" stroke="#f0763e" strokeWidth="10" strokeLinecap="round" />
        <path
          d="M1522 218L1492 231 1504 233 1514 241 1515 252z"
          fill="#f0763e"
          stroke="#f0763e"
          strokeWidth="5"
          strokeLinejoin="round"
        />
      </svg>

      <div className="absolute right-[5px] bottom-0 h-3.5 overflow-hidden bg-white">
        <button className="block pt-1 text-sm font-medium text-[#555]">KEYBOARD SHORTCUTS</button>
      </div>
    </section>
  );
};

const Sidebar = () => (
  <nav className="flex w-[198px] shrink-0 bg-[#005e80] text-sm text-white">
    <div className="flex w-full flex-col bg-[linear-gradient(to_right,#006990_54px,#005e80_54px)] pt-[30px]">
      <div className="flex h-[62px] items-center">
        <button aria-label="Toggle menu" className="w-[54px] pl-4">
          <FaBars className="h-7 w-[18px]" />
        </button>
        <a href="#home" className="pl-4">
          <Logo />
        </a>
      </div>
      {menu.map(({ label, icon: Icon }) => (
        <a key={label} href={`#${label.toLowerCase()}`} className="flex h-[62px] items-center">
          <span className="w-[54px] pl-4">
            <Icon className="h-7 w-[18px]" />
          </span>
          <span className="flex-1 pl-4">{label}</span>
          <FaChevronRight className="mr-3.5 size-2.5" />
        </a>
      ))}
    </div>
  </nav>
);

const App = () => {
  return (
    <div className="flex h-screen overflow-hidden bg-[#fafafa] font-['Open_Sans',sans-serif]">
      <Sidebar />
      <main className="flex min-w-0 flex-1 flex-col">
        <header className="flex h-[65px] items-center justify-end gap-[26px] border-b border-[#d6d6d6] pr-[35px] pb-2">
          <button aria-label="Notifications" className="relative">
            <Bell />
            <span className="absolute inset-0 flex items-center justify-center text-base text-[#c0392b]">3</span>
          </button>
          <button className="size-10 rounded-full bg-[#006990] text-base text-white">A1</button>
        </header>

        <div className="relative min-h-0 flex-1 overflow-hidden border-l border-[#d6d6d6]">
          <MapCanvas />

          <button className="absolute top-0 left-[60px] flex h-[42px] w-[229px] items-center justify-between rounded-b-lg border border-t-0 border-[#c9c9c9] bg-[#fafafa] px-4 pb-0.5 text-xl text-[#006990]">
            Plan Parameters
            <Chevron className="mt-1 h-[11px] w-[18px]" />
          </button>

          <button aria-label="Street view" className="absolute top-[51px] left-2.5 flex size-10 items-center justify-center bg-white">
            <Pegman />
          </button>

          <div className="absolute top-[101px] left-2.5 h-[102px] w-60 rounded-lg border border-[#d6d6d6] bg-white px-1.5">
            <h2 className="text-xl leading-[30px] text-[#006990]">Legend</h2>
            <label className="mt-3 flex items-center gap-[5px] text-xs text-[#757575]">
              <input type="checkbox" />
              Select All
            </label>
            <a href="#breakout" className="mt-2 block text-xs text-[#006990]">
              Breakout C
            </a>
          </div>

          <button className="absolute top-5 right-[21px] flex h-[42px] w-[298px] items-center justify-between rounded-lg bg-[#555] pr-2 pl-2.5 text-lg font-light text-white">
            Manage Audience Plan
            <span className="flex size-6 items-center justify-center rounded-full bg-[#12a9d8]">
              <Chevron className="h-[7px] w-3" />
            </span>
          </button>

          <InventoryPanel />

          <div className="absolute right-2.5 bottom-[85px] flex h-10 w-[190px] items-center justify-between bg-white pr-[23px] pl-[23px] text-sm text-[#666]">
            <button>MAP</button>
            <button className="font-semibold">SATELLITE</button>
          </div>

          <button
            aria-label="Back to top"
            className="absolute right-2.5 bottom-[25px] flex size-10 justify-center bg-[#333] pt-2 text-[#777]"
          >
            <FaChevronUp className="size-2" />
          </button>

          <div className="absolute right-0 bottom-0 flex h-[15px] w-[263px] items-center bg-white/70 pl-2 font-[Roboto,sans-serif] text-[10px] leading-4 whitespace-nowrap text-black">
            <span className="w-[113px] shrink-0">Map data ©2026 Google</span>
            <span className="flex h-full w-[102px] shrink-0 items-center border-l border-[#006990] bg-[#a9ccd6] pl-1.5 font-bold">
              20 KM
              <span className="ml-4 h-1.5 w-11 border-2 border-t-0 border-black" />
            </span>
            <a href="#terms" className="pl-1.5">
              Terms
            </a>
          </div>
        </div>
      </main>

      <div className="relative flex w-4 shrink-0 flex-col items-center bg-[#fcfcfc] py-1">
        <Arrow dir="up" />
        <div className="my-1 flex flex-1 flex-col">
          <span className="h-[84%] w-[9px] rounded-full bg-[#8b8b8b]" />
        </div>
        <Arrow dir="down" />
        <button className="absolute right-2.5 bottom-2.5 h-[38px] w-[118px] rounded-lg bg-white text-lg text-[#006990] shadow-lg">
          Need Help?
        </button>
      </div>
    </div>
  );
};

export default App;
